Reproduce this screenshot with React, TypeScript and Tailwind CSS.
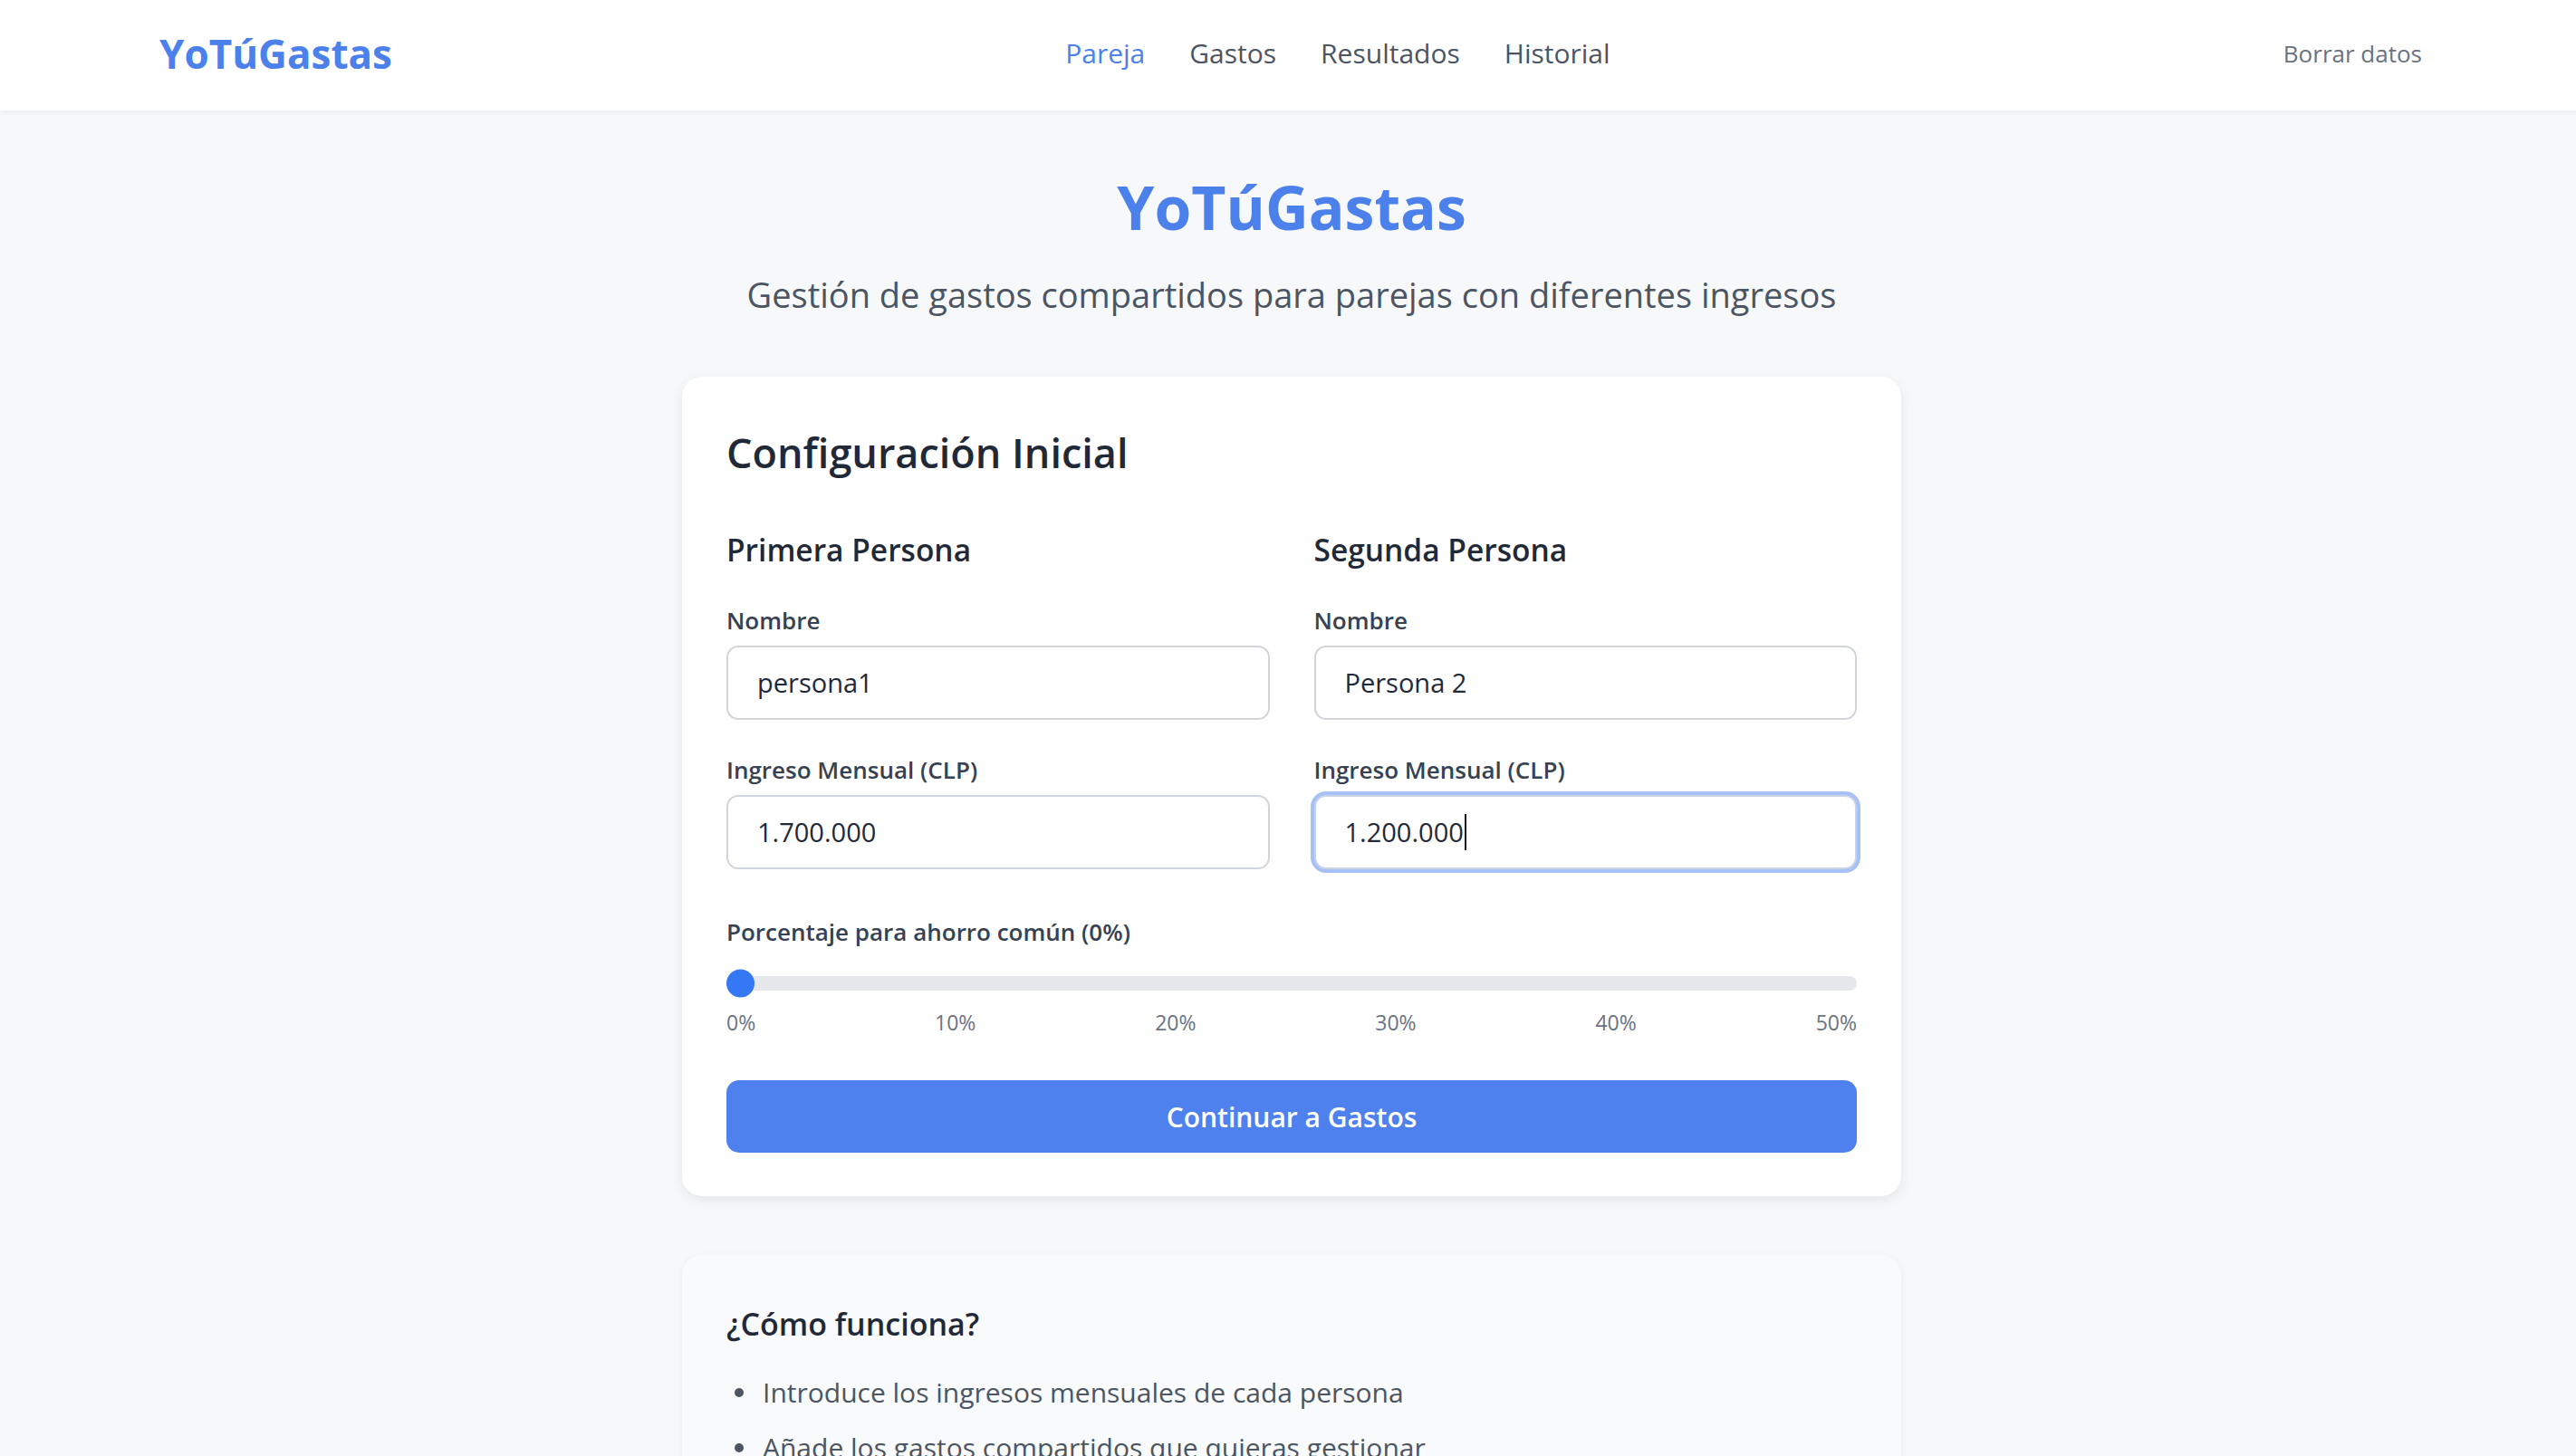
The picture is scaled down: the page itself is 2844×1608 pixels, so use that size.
import React from "react";

function Field({ label, value, focused, top }: { label: string; value: string; focused?: boolean; top: string }) {
  return (
    <div className={top}>
      <div className="leading-[36px] text-[26px] font-semibold text-[#374151]">{label}</div>
      <div
        className={
          focused
            ? "mt-[10px] h-[82px] flex items-center rounded-[13px] border-2 border-[#c9d3e6] ring-[4px] ring-[#a7c0f5] bg-white pl-[32px] text-[29px] text-[#1f2937]"
            : "mt-[10px] h-[82px] flex items-center rounded-[13px] border-2 border-[#d1d5db] bg-white pl-[32px] text-[29px] text-[#1f2937]"
        }
      >
        <span>{value}</span>
        {focused && <span className="ml-[1px] w-[2px] h-[40px] bg-[#111827]" />}
      </div>
    </div>
  );
}

export default function App() {
  const ticks = ["0%", "10%", "20%", "30%", "40%", "50%"];
  const bullets = [
    "Introduce los ingresos mensuales de cada persona",
    "Añade los gastos compartidos que quieras gestionar",
    "Obtén el reparto justo según los ingresos de cada uno",
  ];
  return (
    <div className="min-h-screen bg-[#f7f8fa] font-['Open_Sans',sans-serif]">
      <header className="h-[122px] pb-[5px] bg-white shadow-[0_2px_6px_rgba(0,0,0,0.05)] flex items-center justify-between pl-[176px] pr-[170px]">
        <div className="text-[44px] leading-[56px] font-bold text-[#4c80eb]">YoTúGastas</div>
        <nav className="flex items-center gap-[49px] text-[30px] leading-[44px] text-[#4b5563]">
          <span className="text-[#4c80eb]">Pareja</span>
          <span>Gastos</span>
          <span>Resultados</span>
          <span>Historial</span>
        </nav>
        <button className="text-[26px] leading-[40px] text-[#6b7280]">Borrar datos</button>
      </header>

      <main className="pl-[8px] pb-[120px]">
        <div className="w-[1346px] mx-auto">
          <div className="pt-[66px] text-center">
            <h1 className="text-[66px] leading-[80px] font-bold text-[#4c80eb]">YoTúGastas</h1>
            <p className="mt-[29px] text-[38px] leading-[56px] text-[#4b5563]">
              Gestión de gastos compartidos para parejas con diferentes ingresos
            </p>
          </div>

          <section className="mt-[63px] bg-white rounded-[22px] shadow-[0_4px_14px_rgba(0,0,0,0.08)] px-[49px] pt-[48px] pb-[48px]">
            <h2 className="mt-[8px] text-[45px] leading-[56px] font-semibold text-[#1f2937]">Configuración Inicial</h2>

            <div className="mt-[57px] grid grid-cols-2 gap-x-[49px]">
              <div>
                <h3 className="text-[33.5px] leading-[44px] font-semibold text-[#1f2937]">Primera Persona</h3>
                <Field top="mt-[38px]" label="Nombre" value="persona1" />
                <Field top="mt-[37px]" label="Ingreso Mensual (CLP)" value="1.700.000" />
              </div>
              <div>
                <h3 className="text-[33.5px] leading-[44px] font-semibold text-[#1f2937]">Segunda Persona</h3>
                <Field top="mt-[38px]" label="Nombre" value="Persona 2" />
                <Field top="mt-[37px]" label="Ingreso Mensual (CLP)" value="1.200.000" focused />
              </div>
            </div>

            <div className="mt-[51px] leading-[36px] text-[26px] font-semibold text-[#374151]">
              Porcentaje para ahorro común (0%)
            </div>
            <div className="mt-[23px] h-[32px] flex items-center">
              <div className="relative w-full h-[16px] rounded-full bg-[#e5e7eb]">
                <div className="absolute left-0 top-1/2 -translate-y-1/2 w-[31px] h-[31px] rounded-full bg-[#3478f6]" />
              </div>
            </div>
            <div className="mt-[11px] flex justify-between leading-[32px] text-[23px] text-[#6b7280]">
              {ticks.map((t) => (
                <span key={t}>{t}</span>
              ))}
            </div>

            <button className="mt-[48px] w-full h-[80px] rounded-[14px] bg-[#4e81ed] text-white text-[30px] font-semibold">
              Continuar a Gastos
            </button>
          </section>

          <section className="mt-[65px] bg-[#f9fafb] rounded-[22px] shadow-[0_2px_8px_rgba(0,0,0,0.06)] px-[49px] pt-[52px] pb-[48px]">
            <h2 className="text-[34px] leading-[48px] font-semibold text-[#1f2937]">¿Cómo funciona?</h2>
            <ul className="mt-[30px] flex flex-col gap-[17px]">
              {bullets.map((b) => (
                <li key={b} className="flex items-center leading-[44px] text-[30px] text-[#4b5563]">
                  <span className="ml-[9px] w-[10px] h-[10px] rounded-full bg-[#4b5563]" />
                  <span className="ml-[21px]">{b}</span>
                </li>
              ))}
            </ul>
          </section>
        </div>
      </main>
    </div>
  );
}
